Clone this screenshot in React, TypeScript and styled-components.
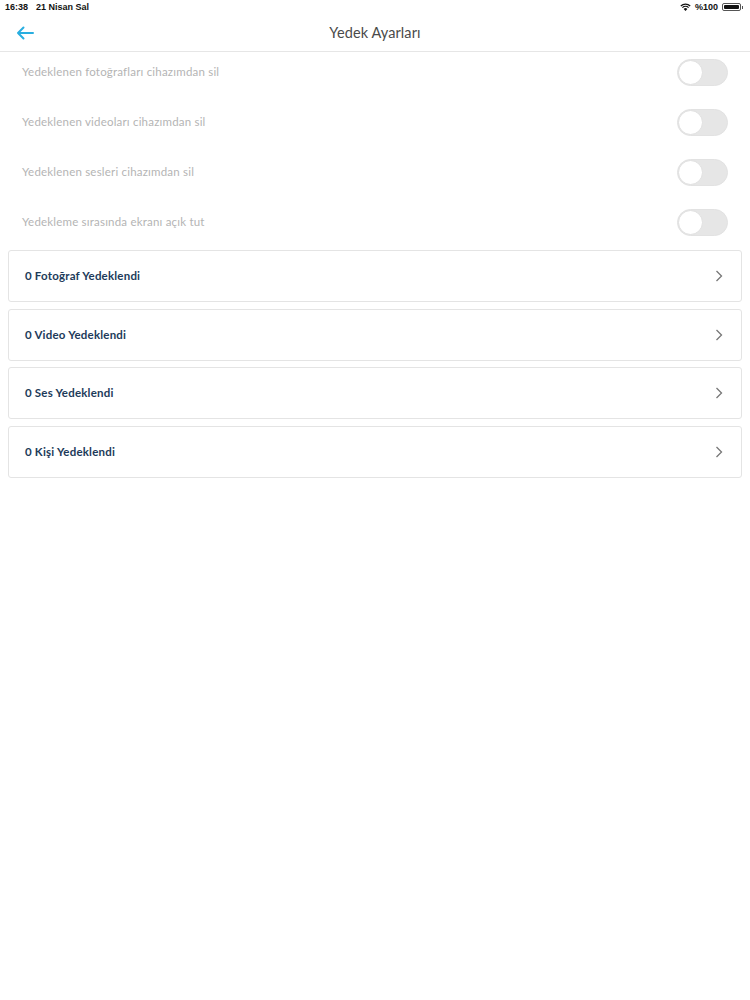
import React, {useState} from 'react';
import styled, {createGlobalStyle} from "styled-components";

const GlobalStyle = createGlobalStyle`
  body {
    margin: 0;
    background: #fff;
    font-family: Lato, "Open Sans", "Liberation Sans", sans-serif;
  }
`;

const toggles = [
  'Yedeklenen fotoğrafları cihazımdan sil',
  'Yedeklenen videoları cihazımdan sil',
  'Yedeklenen sesleri cihazımdan sil',
  'Yedekleme sırasında ekranı açık tut',
];

const backups = [
  '0 Fotoğraf Yedeklendi',
  '0 Video Yedeklendi',
  '0 Ses Yedeklendi',
  '0 Kişi Yedeklendi',
];

function App() {
  const [values, setValues] = useState<boolean[]>([false, false, false, false]);

  const flip = (i: number) => {
    setValues(values.map((v, j) => (j === i ? !v : v)));
  };

  return (
      <>
        <GlobalStyle/>
        <Screen>
          <StatusBar>
            <StatusLeft>
              <span>16:38</span>
              <span>21 Nisan Sal</span>
            </StatusLeft>
            <StatusRight>
              <svg width="11" height="8" viewBox="0 0 11 8">
                <path d="M5.5 8 L3.6 5.9 A2.7 2.7 0 0 1 7.4 5.9 Z" fill="#111"/>
                <path d="M2.4 4.6 A4.4 4.4 0 0 1 8.6 4.6" stroke="#111" strokeWidth="1.2" fill="none"/>
                <path d="M0.8 3 A6.6 6.6 0 0 1 10.2 3" stroke="#111" strokeWidth="1.2" fill="none"/>
              </svg>
              <span>%100</span>
              <Battery>
                <BatteryLevel/>
              </Battery>
            </StatusRight>
          </StatusBar>

          <NavBar>
            <BackButton aria-label="back">
              <svg width="18" height="14" viewBox="0 0 18 14">
                <path d="M17 7 H2 M7.5 1.5 L2 7 L7.5 12.5" stroke="#29aee0" strokeWidth="2"
                      fill="none" strokeLinecap="round" strokeLinejoin="round"/>
              </svg>
            </BackButton>
            <Title>Yedek Ayarları</Title>
          </NavBar>

          <ToggleList>
            {toggles.map((label, i) => (
                <ToggleRow key={label}>
                  <ToggleLabel>{label}</ToggleLabel>
                  <Switch $on={values[i]} onClick={() => flip(i)}>
                    <Knob/>
                  </Switch>
                </ToggleRow>
            ))}
          </ToggleList>

          <CardList>
            {backups.map(label => (
                <Card key={label}>
                  <CardTitle>{label}</CardTitle>
                  <svg width="8" height="12" viewBox="0 0 8 12">
                    <path d="M1.5 1 L6.5 6 L1.5 11" stroke="#777" strokeWidth="1.3" fill="none"/>
                  </svg>
                </Card>
            ))}
          </CardList>
        </Screen>
      </>
  );
}

const Screen = styled.div`
  width: 750px;
  min-height: 1000px;
  background: #fff;
`;

const StatusBar = styled.div`
  height: 14px;
  padding: 0 9px 0 5px;
  display: flex;
  align-items: center;
  justify-content: space-between;
  font-family: "Liberation Sans", sans-serif;
  font-size: 9px;
  font-weight: 600;
  color: #111;
`;

const StatusLeft = styled.div`
  display: flex;
  gap: 8px;
`;

const StatusRight = styled.div`
  display: flex;
  align-items: center;
  gap: 4px;
`;

const Battery = styled.div`
  width: 19px;
  height: 8px;
  border: 1px solid #555;
  border-radius: 2px;
  padding: 1px;
  box-sizing: border-box;
  display: flex;
  position: relative;

  &::after {
    content: '';
    position: absolute;
    right: -3px;
    top: 2px;
    width: 1.5px;
    height: 2.5px;
    background: #555;
  }
`;

const BatteryLevel = styled.div`
  flex: 1;
  background: #111;
  border-radius: 1px;
`;

const NavBar = styled.div`
  height: 37px;
  border-bottom: 1px solid #e6e6e6;
  display: grid;
  grid-template-columns: 60px 1fr 60px;
  align-items: center;
`;

const BackButton = styled.button`
  border: none;
  background: none;
  padding: 0 0 0 16px;
  display: flex;
  align-items: center;
  cursor: pointer;
`;

const Title = styled.h1`
  margin: 0;
  text-align: center;
  font-size: 14.5px;
  font-weight: 400;
  letter-spacing: 0.1px;
  color: #4a4a4a;
`;

const ToggleList = styled.div`
  display: flex;
  flex-direction: column;
  gap: 10px;
  padding: 0 22px;
`;

const ToggleRow = styled.div`
  height: 40px;
  display: flex;
  align-items: center;
  justify-content: space-between;
`;

const ToggleLabel = styled.span`
  font-size: 11.5px;
  letter-spacing: 0.2px;
  color: #b4b4b4;
  margin-top: -1px;
`;

const Switch = styled.div<{ $on: boolean }>`
  width: 51px;
  height: 27px;
  border-radius: 14px;
  box-sizing: border-box;
  border: 1px solid ${p => (p.$on ? '#29aee0' : '#e2e2e2')};
  background: ${p => (p.$on ? '#29aee0' : '#e6e6e6')};
  display: flex;
  align-items: center;
  justify-content: ${p => (p.$on ? 'flex-end' : 'flex-start')};
  cursor: pointer;
`;

const Knob = styled.div`
  width: 25px;
  height: 25px;
  border-radius: 50%;
  background: #fff;
  box-sizing: border-box;
  border: 1px solid #e0e0e0;
`;

const CardList = styled.div`
  display: flex;
  flex-direction: column;
  gap: 6.5px;
  padding: 8px 8px 0;
`;

const Card = styled.div`
  height: 52px;
  box-sizing: border-box;
  border: 1px solid #e4e4e4;
  border-radius: 3px;
  padding: 0 18px 0 16px;
  display: flex;
  align-items: center;
  justify-content: space-between;
  cursor: pointer;
`;

const CardTitle = styled.span`
  font-size: 11.5px;
  font-weight: 700;
  letter-spacing: 0.2px;
  color: #1d3b5a;
  margin-top: -1px;
`;

export default App;
